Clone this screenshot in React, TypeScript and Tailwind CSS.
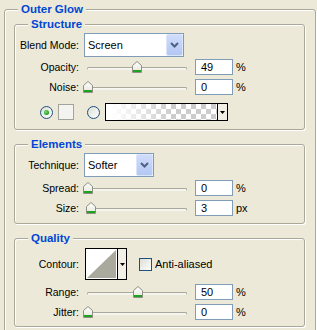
import React from "react";

type GroupProps = {
  title: string;
  className?: string;
  children: React.ReactNode;
};

function Group({ title, className = "", children }: GroupProps) {
  return (
    <div
      className={`rounded-[3px] border border-[#aca899] shadow-[inset_1px_1px_0_#fff,1px_1px_0_#fff] ${className}`}
    >
      <div className="-mt-[7px] ml-[13px] h-[13px] w-fit bg-[#ece9d8] px-[3px] text-[11.5px] font-bold leading-[13px] text-[#0046d5]">
        {title}
      </div>
      {children}
    </div>
  );
}

function Label({ children }: { children: React.ReactNode }) {
  return <div className="w-[64px] shrink-0 text-right">{children}</div>;
}

function Chevron() {
  return (
    <svg width="9" height="6" viewBox="0 0 9 6">
      <path d="M1 1 L4.5 4.5 L8 1" fill="none" stroke="#4d6185" strokeWidth="2" />
    </svg>
  );
}

function Select({ value, width }: { value: string; width: string }) {
  return (
    <div className={`ml-[5px] flex h-[24px] items-stretch border border-[#7f9db9] bg-white ${width}`}>
      <div className="flex flex-1 items-center pl-[3px] text-[11px]">{value}</div>
      <div className="flex w-[17px] items-center justify-center rounded-[2px] border border-[#dae4fb] bg-gradient-to-b from-[#d0dcfa] to-[#b3c7f4]">
        <Chevron />
      </div>
    </div>
  );
}

function Thumb() {
  return (
    <svg width="10" height="12" viewBox="0 0 10 12">
      <defs>
        <linearGradient id="tg" x1="0" y1="0" x2="0" y2="1">
          <stop offset="0" stopColor="#ffffff" />
          <stop offset="1" stopColor="#e6e6dc" />
        </linearGradient>
      </defs>
      <path d="M0.5 4.5 L5 0.5 L9.5 4.5 L9.5 11.5 L0.5 11.5 Z" fill="url(#tg)" stroke="#8f8f86" />
      <rect x="1" y="9" width="8" height="2" fill="#21a121" />
    </svg>
  );
}

function SliderRow({ label, value, unit }: { label: string; value: number; unit: string }) {
  return (
    <div className="flex h-[16px] items-center">
      <Label>{label}</Label>
      <div className="relative ml-[4px] flex h-full w-[108px] items-center">
        <div className="ml-[4px] mt-[2px] h-[3px] w-[100px] rounded-full border border-[#a9a89c] border-b-[#f4f3ee] bg-[#f7f6f1]" />
        <div className="absolute top-[2px]" style={{ left: value }}>
          <Thumb />
        </div>
      </div>
      <div className="ml-[4px] flex h-[16px] w-[38px] items-center border border-[#7f9db9] bg-white pl-[5px] text-[11px]">
        {value}
      </div>
      <div className="ml-[3px] text-[11px]">{unit}</div>
    </div>
  );
}

function Radio({ checked }: { checked?: boolean }) {
  return (
    <svg width="13" height="13" viewBox="0 0 13 13">
      <defs>
        <linearGradient id="rg" x1="0" y1="0" x2="1" y2="1">
          <stop offset="0" stopColor="#dcdcd4" />
          <stop offset="1" stopColor="#ffffff" />
        </linearGradient>
        <radialGradient id="dot" cx="0.4" cy="0.4" r="0.6">
          <stop offset="0" stopColor="#6fe06f" />
          <stop offset="1" stopColor="#1f9a1f" />
        </radialGradient>
      </defs>
      <circle cx="6.5" cy="6.5" r="6" fill="url(#rg)" stroke="#1c5180" />
      {checked && <circle cx="6.5" cy="6.5" r="2.5" fill="url(#dot)" />}
    </svg>
  );
}

function DropArrow() {
  return (
    <div className="flex w-[10px] items-center justify-center border-l border-black bg-[#f1efe6]">
      <svg width="5" height="3" viewBox="0 0 5 3">
        <path d="M0 0 H5 L2.5 3 Z" fill="#000" />
      </svg>
    </div>
  );
}

export default function App() {
  return (
    <div className="h-[330px] w-[317px] overflow-hidden bg-[#ece9d8] pt-[9px] font-['Liberation_Sans',Arial,sans-serif] text-[10.5px] leading-[13px] text-black">
      <Group title="Outer Glow" className="ml-[4px] w-[312px] pb-[12px]">
        <Group title="Structure" className="ml-[9px] mt-[8px] w-[291px] pb-[8px]">
          <div className="pt-[2px]">
            <div className="flex h-[24px] items-center">
              <Label>Blend Mode:</Label>
              <Select value="Screen" width="w-[100px]" />
            </div>
            <div className="mt-[2px]">
              <SliderRow label="Opacity:" value={49} unit="%" />
            </div>
            <div className="mt-[4px]">
              <SliderRow label="Noise:" value={0} unit="%" />
            </div>
            <div className="mt-[8px] flex h-[18px] items-center pl-[25px]">
              <Radio checked />
              <div className="ml-[5px] h-[16px] w-[16px] border border-[#a3a39a] bg-[#f3f3f1]" />
              <div className="ml-[13px] flex">
                <Radio />
              </div>
              <div className="ml-[5px] flex h-[18px] w-[123px] border border-black">
                <div className="flex-1 bg-[repeating-conic-gradient(#cccccc_0_25%,#ffffff_0_50%)] bg-[length:10px_10px]">
                  <div className="h-full w-full bg-gradient-to-r from-white from-5% to-transparent to-60%" />
                </div>
                <DropArrow />
              </div>
            </div>
          </div>
        </Group>

        <Group title="Elements" className="ml-[9px] mt-[14px] w-[291px] pb-[7px]">
          <div className="pt-[2px]">
            <div className="flex h-[24px] items-center">
              <Label>Technique:</Label>
              <Select value="Softer" width="w-[70px]" />
            </div>
            <div className="mt-[3px]">
              <SliderRow label="Spread:" value={0} unit="%" />
            </div>
            <div className="mt-[4px]">
              <SliderRow label="Size:" value={3} unit="px" />
            </div>
          </div>
        </Group>

        <Group title="Quality" className="ml-[9px] mt-[14px] w-[291px] pb-[6px]">
          <div className="pt-[3px]">
            <div className="flex h-[32px] items-center">
              <Label>Contour:</Label>
              <div className="ml-[6px] flex h-[32px] w-[42px] border border-black bg-white">
                <div className="flex-1 p-[1px]">
                  <svg width="29" height="28" viewBox="0 0 29 28" className="block">
                    <rect width="29" height="28" fill="#fff" />
                    <path d="M0 28 L29 0 L29 28 Z" fill="#aaa99e" />
                  </svg>
                </div>
                <DropArrow />
              </div>
              <svg width="13" height="13" viewBox="0 0 13 13" className="ml-[12px]">
                <defs>
                  <linearGradient id="cg" x1="0" y1="0" x2="1" y2="1">
                    <stop offset="0" stopColor="#dcdcd4" />
                    <stop offset="1" stopColor="#ffffff" />
                  </linearGradient>
                </defs>
                <rect x="0.5" y="0.5" width="12" height="12" fill="url(#cg)" stroke="#1c5180" />
              </svg>
              <div className="ml-[3px] text-[11px]">Anti-aliased</div>
            </div>
            <div className="mt-[4px]">
              <SliderRow label="Range:" value={50} unit="%" />
            </div>
            <div className="mt-[4px]">
              <SliderRow label="Jitter:" value={0} unit="%" />
            </div>
          </div>
        </Group>
      </Group>
    </div>
  );
}
